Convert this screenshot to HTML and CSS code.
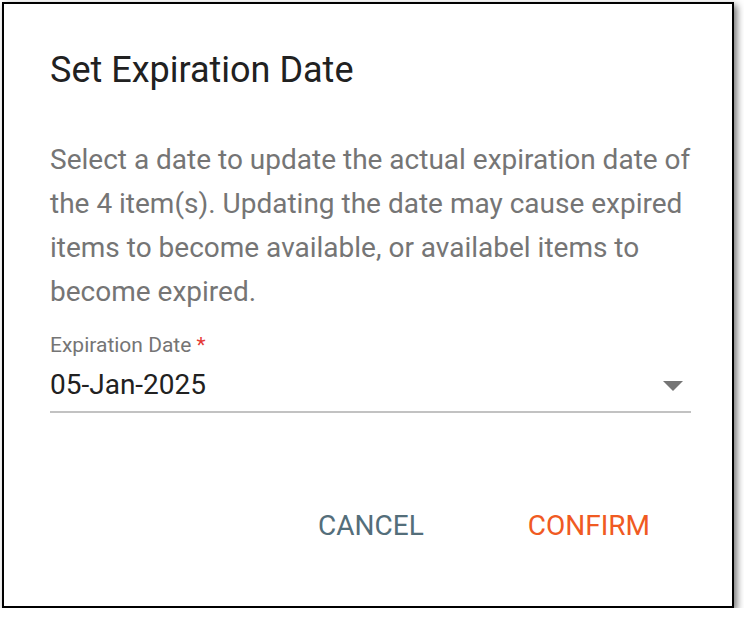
FILE: index.html
```html
<!DOCTYPE html>
<html lang="en">
<head>
<meta charset="utf-8">
<title>Set Expiration Date</title>
<link rel="stylesheet" href="styles.css">
</head>
<body>
<div class="frame">
  <div class="dialog">
    <h1 class="title">Set Expiration Date</h1>
    <p class="body-text">Select a date to update the actual expiration date of the 4 item(s). Updating the date may cause expired items to become available, or availabel items to become expired.</p>
    <div class="field">
      <div class="label">Expiration Date <span class="req">*</span></div>
      <div class="select">
        <span class="value">05-Jan-2025</span>
        <svg class="arrow" width="20" height="10" viewBox="0 0 20 10"><path d="M0 0 L20 0 L10 10 Z" fill="#757575"/></svg>
      </div>
    </div>
    <div class="actions">
      <button class="btn cancel">CANCEL</button>
      <button class="btn confirm">CONFIRM</button>
    </div>
  </div>
</div>
</body>
</html>
```
FILE: styles.css
```css
html, body {
  margin: 0;
  padding: 0;
  background: #ffffff;
}
body {
  font-family: Roboto, "Noto Sans", sans-serif;
}
.frame {
  box-sizing: border-box;
  margin: 2px 0 0 2px;
  width: 732px;
  height: 606px;
  border: 2px solid #000;
  background: #fff;
  box-shadow: 3px 3px 7px rgba(0, 0, 0, 0.55);
}
.dialog {
  display: flex;
  flex-direction: column;
  padding: 45px 41px 0 46px;
}
.title {
  margin: 0;
  font-size: 36px;
  line-height: 42px;
  font-weight: 400;
  color: #212121;
  letter-spacing: 0;
}
.body-text {
  margin: 47px 0 0 0;
  font-size: 28px;
  line-height: 44px;
  color: #757575;
}
.field {
  margin-top: 19px;
  display: flex;
  flex-direction: column;
}
.label {
  font-size: 21px;
  line-height: 24px;
  color: #757575;
}
.req {
  color: #e53935;
}
.select {
  margin-top: 10px;
  display: flex;
  align-items: center;
  justify-content: space-between;
  padding-bottom: 8px;
  border-bottom: 2px solid #c2c2c2;
}
.value {
  font-size: 28px;
  line-height: 36px;
  color: #212121;
}
.arrow {
  margin-right: 8px;
  margin-top: 2px;
}
.actions {
  margin-top: 95px;
  display: flex;
  justify-content: flex-end;
  gap: 104px;
  padding-right: 41px;
}
.btn {
  border: none;
  background: none;
  padding: 0;
  font-family: Roboto, "Noto Sans", sans-serif;
  font-size: 28px;
  line-height: 36px;
  font-weight: 400;
}
.cancel {
  color: #546e7a;
}
.confirm {
  color: #f05a22;
}
```
